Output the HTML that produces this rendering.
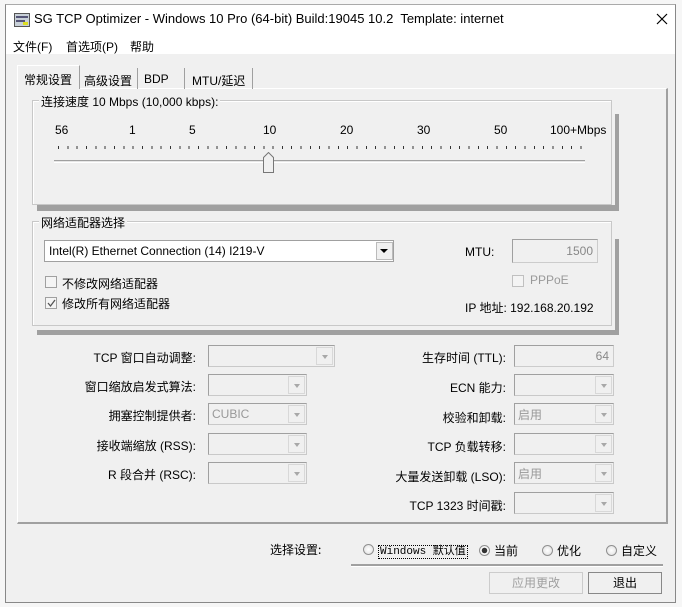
<!DOCTYPE html>
<html><head><meta charset="utf-8"><style>
*{margin:0;padding:0;box-sizing:border-box}
body{width:682px;height:607px;background:#f6f6f6;font-family:"Liberation Sans","Noto Sans CJK SC",sans-serif;font-size:12px;color:#000;position:relative;overflow:hidden}
.a{position:absolute;white-space:nowrap}
#win{position:absolute;left:5px;top:4px;width:671px;height:599px;background:#f0f0f0;border:1px solid #888;border-top-color:#aaa}
#top{position:absolute;left:0;top:0;width:669px;height:49px;background:#fff}
.grp{position:absolute;border:1px solid #c8c8c8;box-shadow:inset 1px 1px 0 #fff}
.lg{position:absolute;top:-8px;left:6px;background:#f0f0f0;padding:0 2px}
.bar{position:absolute;background:#a0a0a0}
.cb{position:absolute;height:22px;border:1px solid #c9c9c9;border-top-color:#a0a0a0;border-left-color:#a0a0a0;background:#f0f0f0}
.cb .dd{position:absolute;right:1px;top:1px;width:17px;height:18px;border:1px solid #d8d8d8;background:#f0f0f0}
.cb .dd:after{content:"";position:absolute;left:5px;top:7px;border:3px solid transparent;border-top:4px solid #a8a8a8}
.r{text-align:right}
.rad{display:inline-block;width:11px;height:11px;border-radius:50%;border:1px solid #909090;background:radial-gradient(#fff,#ddd);vertical-align:-1px;margin-right:4px;position:relative}
.chk{position:absolute;width:12px;height:12px;border:1px solid #a0a0a0;background:#f4f4f4}
.btn{position:absolute;height:22px;border:1px solid #adadad;background:#e1e1e1;text-align:center;line-height:20px}
</style></head><body>
<div id="win">
<div id="top"></div>
<svg class="a" style="left:8px;top:8px" width="16" height="14"><rect x="0.5" y="0.5" width="15" height="13" fill="#c8d0d8" stroke="#555"/><rect x="2" y="3" width="12" height="2" fill="#557"/><rect x="2" y="7" width="9" height="2" fill="#557"/><rect x="9" y="9" width="5" height="3" fill="#dd2"/></svg>
<div class="a" style="left:28px;top:6px;font-size:13px">SG TCP Optimizer - Windows 10 Pro (64-bit) Build:19045 10.2&nbsp; Template: internet</div>
<svg class="a" style="left:650px;top:8px" width="12" height="12"><path d="M1 1L11 11M11 1L1 11" stroke="#000" stroke-width="1.2"/></svg>
<div class="a" style="left:7px;top:33px">文件(F)</div>
<div class="a" style="left:60px;top:33px">首选项(P)</div>
<div class="a" style="left:124px;top:33px">帮助</div>

<!-- tabs -->
<div class="a" style="left:11px;top:83px;width:651px;height:436px;border:1px solid #fff;border-right:2px solid #a0a0a0;border-bottom:2px solid #a0a0a0"></div>
<div class="a" style="left:11px;top:60px;width:63px;height:24px;background:#f0f0f0;border:1px solid #fff;border-right:1px solid #a0a0a0;border-bottom:none;padding:5px 0 0 6px">常规设置</div>
<div class="a" style="left:74px;top:63px;width:58px;height:21px;border-right:1px solid #a0a0a0;padding:4px 0 0 4px">高级设置</div>
<div class="a" style="left:132px;top:63px;width:47px;height:21px;border-right:1px solid #a0a0a0;padding:4px 0 0 6px">BDP</div>
<div class="a" style="left:179px;top:63px;width:68px;height:21px;border-right:1px solid #a0a0a0;padding:4px 0 0 7px">MTU/延迟</div>

<!-- speed group -->
<div class="grp" style="left:26px;top:95px;width:580px;height:105px"><div class="lg">连接速度 10 Mbps (10,000 kbps):</div></div>
<div class="bar" style="left:609px;top:109px;width:4px;height:97px"></div>
<div class="bar" style="left:31px;top:200px;width:582px;height:6px"></div>
<div class="a" style="left:49px;top:118px">56</div>
<div class="a" style="left:123px;top:118px">1</div>
<div class="a" style="left:183px;top:118px">5</div>
<div class="a" style="left:257px;top:118px">10</div>
<div class="a" style="left:334px;top:118px">20</div>
<div class="a" style="left:411px;top:118px">30</div>
<div class="a" style="left:488px;top:118px">50</div>
<div class="a" style="left:544px;top:118px;width:62px;overflow:hidden">100+Mbps</div>
<div class="a" style="left:52px;top:141px;width:526px;height:3px;background:repeating-linear-gradient(90deg,#333 0 1px,transparent 1px 9.33px)"></div>
<div class="a" style="left:48px;top:155px;width:531px;height:3px;border-top:1px solid #a0a0a0;border-bottom:1px solid #fff;background:#e6e6e6"></div>
<svg class="a" style="left:257px;top:147px" width="11" height="21"><path d="M0.5 20.5V5.5L5.5 0.5L10.5 5.5V20.5Z" fill="#f0f0f0" stroke="#777"/></svg>

<!-- adapter group -->
<div class="grp" style="left:26px;top:216px;width:580px;height:105px"><div class="lg">网络适配器选择</div></div>
<div class="bar" style="left:609px;top:234px;width:4px;height:92px"></div>
<div class="bar" style="left:31px;top:325px;width:582px;height:5px"></div>
<div class="a" style="left:38px;top:235px;width:350px;height:22px;background:#fff;border:1px solid #a0a0a0;padding:3px 4px">Intel(R) Ethernet Connection (14) I219-V</div>
<div class="a" style="left:370px;top:237px;width:17px;height:18px;border:1px solid #bbb;background:#f0f0f0"></div>
<svg class="a" style="left:374px;top:244px" width="9" height="5"><path d="M0 0H8L4 4Z" fill="#000"/></svg>
<div class="chk" style="left:39px;top:271px"></div>
<div class="a" style="left:56px;top:270px">不修改网络适配器</div>
<div class="chk" style="left:39px;top:292px"></div>
<svg class="a" style="left:40px;top:293px" width="11" height="11"><path d="M2 5L4.5 8L9 2" stroke="#555" fill="none" stroke-width="1.3"/></svg>
<div class="a" style="left:56px;top:290px">修改所有网络适配器</div>
<div class="a" style="left:459px;top:240px">MTU:</div>
<div class="a r" style="left:506px;top:234px;width:86px;height:24px;border:1px solid #ccc;border-top-color:#a0a0a0;border-left-color:#a0a0a0;background:#f0f0f0;color:#888;padding:4px 4px">1500</div>
<div class="chk" style="left:506px;top:270px;border-color:#c0c0c0"></div>
<div class="a" style="left:524px;top:268px;color:#999">PPPoE</div>
<div class="a" style="left:459px;top:294px">IP 地址: 192.168.20.192</div>

<!-- left fields -->
<div class="a r" style="left:40px;top:344px;width:150px">TCP 窗口自动调整:</div>
<div class="cb" style="left:202px;top:340px;width:127px"><div class="dd"></div></div>
<div class="a r" style="left:40px;top:373px;width:150px">窗口缩放启发式算法:</div>
<div class="cb" style="left:202px;top:369px;width:99px"><div class="dd"></div></div>
<div class="a r" style="left:40px;top:402px;width:150px">拥塞控制提供者:</div>
<div class="cb" style="left:202px;top:398px;width:99px;color:#999;padding:3px 3px">CUBIC<div class="dd"></div></div>
<div class="a r" style="left:40px;top:432px;width:150px">接收端缩放 (RSS):</div>
<div class="cb" style="left:202px;top:428px;width:99px"><div class="dd"></div></div>
<div class="a r" style="left:40px;top:461px;width:150px">R 段合并 (RSC):</div>
<div class="cb" style="left:202px;top:457px;width:99px"><div class="dd"></div></div>

<!-- right fields -->
<div class="a r" style="left:330px;top:344px;width:170px">生存时间 (TTL):</div>
<div class="a r" style="left:508px;top:340px;width:100px;height:22px;border:1px solid #ccc;border-top-color:#a0a0a0;border-left-color:#a0a0a0;color:#888;padding:3px 4px">64</div>
<div class="a r" style="left:330px;top:374px;width:170px">ECN 能力:</div>
<div class="cb" style="left:508px;top:369px;width:100px"><div class="dd"></div></div>
<div class="a r" style="left:330px;top:404px;width:170px">校验和卸载:</div>
<div class="cb" style="left:508px;top:398px;width:100px;color:#999;padding:2px 3px">启用<div class="dd"></div></div>
<div class="a r" style="left:330px;top:433px;width:170px">TCP 负载转移:</div>
<div class="cb" style="left:508px;top:428px;width:100px"><div class="dd"></div></div>
<div class="a r" style="left:330px;top:463px;width:170px">大量发送卸载 (LSO):</div>
<div class="cb" style="left:508px;top:457px;width:100px;color:#999;padding:2px 3px">启用<div class="dd"></div></div>
<div class="a r" style="left:330px;top:492px;width:170px">TCP 1323 时间戳:</div>
<div class="cb" style="left:508px;top:487px;width:100px"><div class="dd"></div></div>

<!-- bottom -->
<div class="a" style="left:264px;top:536px;font-family:'Noto Sans CJK SC',sans-serif">选择设置:</div>
<div class="a" style="left:357px;top:537px"><span class="rad"></span><span style="font-family:'Liberation Mono',monospace;border:1px dotted #000;font-size:11px;padding:0 1px">Windows 默认值</span></div>
<div class="a" style="left:473px;top:537px"><span class="rad" style="background:radial-gradient(#333 0 2.5px,#fff 3px,#ddd)"></span>当前</div>
<div class="a" style="left:536px;top:537px"><span class="rad"></span>优化</div>
<div class="a" style="left:600px;top:537px"><span class="rad"></span>自定义</div>
<div class="a" style="left:345px;top:559px;width:312px;height:3px;border-top:2px solid #a0a0a0;border-bottom:1px solid #fff"></div>
<div class="btn" style="left:483px;top:567px;width:94px;color:#a0a0a0;border-color:#ccc;background:#f0f0f0">应用更改</div>
<div class="btn" style="left:582px;top:567px;width:74px;border-color:#888;background:#f0f0f0">退出</div>
</div>
</body></html>
